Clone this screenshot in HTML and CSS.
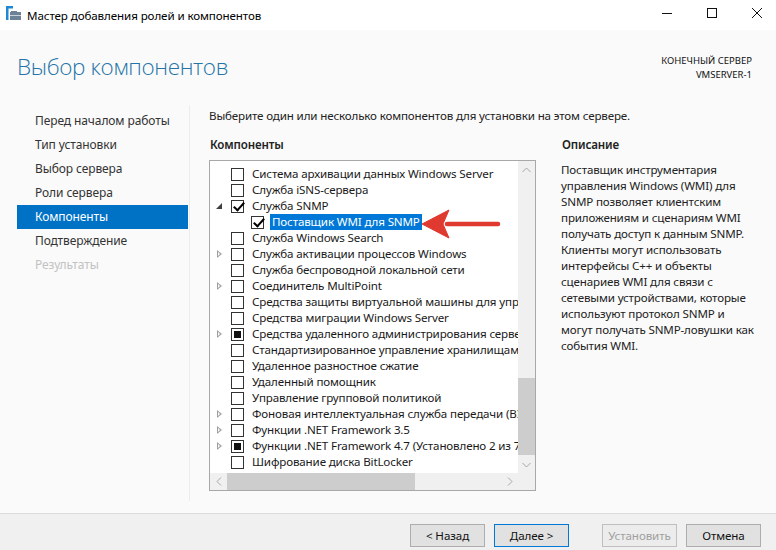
FILE: index.html
```html
<!DOCTYPE html>
<html lang="ru">
<head>
<meta charset="utf-8">
<title>Мастер добавления ролей и компонентов</title>
<link rel="stylesheet" href="styles.css">
</head>
<body>
<div class="window">
  <div class="titlebar">
    <svg class="app-icon" width="16" height="16" viewBox="0 0 16 16">
      <rect x="0" y="0" width="7" height="2.5" fill="#1e88d6"/>
      <rect x="0" y="0" width="2.5" height="14" fill="#1e88d6"/>
      <rect x="5" y="5" width="3" height="1.5" fill="#6d8296"/>
      <rect x="4" y="6" width="11" height="8" fill="#6d8296"/>
      <rect x="8" y="5" width="3" height="1.2" fill="#6d8296"/>
      <rect x="4" y="9" width="11" height="1" fill="#c9d3dc"/>
    </svg>
    <span class="title">Мастер добавления ролей и компонентов</span>
    <div class="controls">
      <span class="ctl"><svg width="10" height="10" viewBox="0 0 10 10"><path d="M0 5.5 H10" stroke="#111" stroke-width="1"/></svg></span>
      <span class="ctl"><svg width="10" height="10" viewBox="0 0 10 10"><rect x="0.5" y="0.5" width="9" height="9" fill="none" stroke="#111" stroke-width="1"/></svg></span>
      <span class="ctl"><svg width="10" height="10" viewBox="0 0 10 10"><path d="M0 0 L10 10 M10 0 L0 10" stroke="#111" stroke-width="1"/></svg></span>
    </div>
  </div>

  <div class="content">
    <div class="header">
      <h1 class="page-title">Выбор компонентов</h1>
      <div class="server">
        <div>КОНЕЧНЫЙ СЕРВЕР</div>
        <div>VMSERVER-1</div>
      </div>
    </div>

    <div class="body">
      <nav class="nav">
        <div class="nav-item">Перед началом работы</div>
        <div class="nav-item">Тип установки</div>
        <div class="nav-item">Выбор сервера</div>
        <div class="nav-item">Роли сервера</div>
        <div class="nav-item active">Компоненты</div>
        <div class="nav-item">Подтверждение</div>
        <div class="nav-item disabled">Результаты</div>
      </nav>

      <div class="main">
        <p class="intro">Выберите один или несколько компонентов для установки на этом сервере.</p>
        <div class="columns">
          <div class="components">
            <h2 class="col-head">Компоненты</h2>
            <div class="tree">
              <div class="tree-list">
                <div class="row"><span class="exp"></span><span class="cb"></span><span class="lbl">Система архивации данных Windows Server</span></div>
                <div class="row"><span class="exp"></span><span class="cb"></span><span class="lbl">Служба iSNS-сервера</span></div>
                <div class="row"><span class="exp open"></span><span class="cb checked"></span><span class="lbl">Служба SNMP</span></div>
                <div class="row child"><span class="exp"></span><span class="cb checked"></span><span class="lbl selected">Поставщик WMI для SNMP</span></div>
                <div class="row"><span class="exp"></span><span class="cb"></span><span class="lbl">Служба Windows Search</span></div>
                <div class="row"><span class="exp closed"></span><span class="cb"></span><span class="lbl">Служба активации процессов Windows</span></div>
                <div class="row"><span class="exp"></span><span class="cb"></span><span class="lbl">Служба беспроводной локальной сети</span></div>
                <div class="row"><span class="exp closed"></span><span class="cb"></span><span class="lbl">Соединитель MultiPoint</span></div>
                <div class="row"><span class="exp"></span><span class="cb"></span><span class="lbl">Средства защиты виртуальной машины для управления экранированной структурой</span></div>
                <div class="row"><span class="exp"></span><span class="cb"></span><span class="lbl">Средства миграции Windows Server</span></div>
                <div class="row"><span class="exp closed"></span><span class="cb partial"></span><span class="lbl">Средства удаленного администрирования сервера</span></div>
                <div class="row"><span class="exp"></span><span class="cb"></span><span class="lbl">Стандартизированное управление хранилищами Windows</span></div>
                <div class="row"><span class="exp"></span><span class="cb"></span><span class="lbl">Удаленное разностное сжатие</span></div>
                <div class="row"><span class="exp"></span><span class="cb"></span><span class="lbl">Удаленный помощник</span></div>
                <div class="row"><span class="exp"></span><span class="cb"></span><span class="lbl">Управление групповой политикой</span></div>
                <div class="row"><span class="exp closed"></span><span class="cb"></span><span class="lbl">Фоновая интеллектуальная служба передачи (BITS)</span></div>
                <div class="row"><span class="exp closed"></span><span class="cb"></span><span class="lbl">Функции .NET Framework 3.5</span></div>
                <div class="row"><span class="exp closed"></span><span class="cb partial"></span><span class="lbl">Функции .NET Framework 4.7 (Установлено 2 из 7)</span></div>
                <div class="row"><span class="exp"></span><span class="cb"></span><span class="lbl">Шифрование диска BitLocker</span></div>
              </div>
              <div class="vscroll">
                <span class="sb-btn"><svg width="9" height="6" viewBox="0 0 9 6"><path d="M0.5 5 L4.5 1 L8.5 5" fill="none" stroke="#a6a6a6" stroke-width="1"/></svg></span>
                <div class="vtrack"><div class="vthumb"></div></div>
                <span class="sb-btn"><svg width="9" height="6" viewBox="0 0 9 6"><path d="M0.5 1 L4.5 5 L8.5 1" fill="none" stroke="#a6a6a6" stroke-width="1"/></svg></span>
              </div>
              <div class="hscroll">
                <span class="sb-btn h"><svg width="6" height="9" viewBox="0 0 6 9"><path d="M5 0.5 L1 4.5 L5 8.5" fill="none" stroke="#a6a6a6" stroke-width="1"/></svg></span>
                <div class="htrack"><div class="hthumb"></div></div>
                <span class="sb-btn h"><svg width="6" height="9" viewBox="0 0 6 9"><path d="M1 0.5 L5 4.5 L1 8.5" fill="none" stroke="#a6a6a6" stroke-width="1"/></svg></span>
              </div>
              <div class="corner"></div>
            </div>
          </div>
          <div class="description">
            <h2 class="col-head">Описание</h2>
            <div class="desc-text">
              <div class="dl">Поставщик инструментария</div>
              <div class="dl">управления Windows (WMI) для</div>
              <div class="dl">SNMP позволяет клиентским</div>
              <div class="dl">приложениям и сценариям WMI</div>
              <div class="dl">получать доступ к данным SNMP.</div>
              <div class="dl">Клиенты могут использовать</div>
              <div class="dl">интерфейсы C++ и объекты</div>
              <div class="dl">сценариев WMI для связи с</div>
              <div class="dl">сетевыми устройствами, которые</div>
              <div class="dl">используют протокол SNMP и</div>
              <div class="dl">могут получать SNMP-ловушки как</div>
              <div class="dl">события WMI.</div>
            </div>
          </div>
        </div>
      </div>
    </div>

    <svg class="callout" width="84" height="34" viewBox="0 0 84 34">
      <path d="M26 16 H77" stroke="#e0392f" stroke-width="4.5" stroke-linecap="round"/>
      <path d="M1 16 L28 2 L22 16 L28 30 Z" fill="#e0392f" stroke="#e0392f" stroke-width="1" stroke-linejoin="round"/>
    </svg>
  </div>

  <div class="footer">
    <button class="btn">&lt; Назад</button>
    <button class="btn primary">Далее &gt;</button>
    <button class="btn disabled wide-gap">Установить</button>
    <button class="btn">Отмена</button>
  </div>
</div>
</body>
</html>
```

FILE: styles.css
```css
* { box-sizing: border-box; }

html, body {
  margin: 0;
  padding: 0;
}

body {
  width: 776px;
  height: 550px;
  overflow: hidden;
  font-family: "Noto Sans", "Open Sans", sans-serif;
  font-size: 11.6px;
  letter-spacing: -0.15px;
  color: #222;
  background: #fafafa;
}

.window {
  display: flex;
  flex-direction: column;
  height: 550px;
}

/* Title bar */
.titlebar {
  height: 30px;
  flex: none;
  display: flex;
  align-items: center;
  background: #ffffff;
  padding-left: 6px;
}

.app-icon { flex: none; margin-top: -2px; }

.title {
  margin-left: 5px;
  font-size: 11.6px;
  letter-spacing: -0.1px;
  color: #000;
}

.controls {
  margin-left: auto;
  display: flex;
  height: 30px;
}

.ctl {
  width: 45px;
  height: 30px;
  display: flex;
  align-items: center;
  justify-content: center;
  padding-left: 6px;
  margin-top: -2px;
}

/* Content */
.content {
  flex: 1;
  position: relative;
  display: flex;
  flex-direction: column;
  background: #fafafa;
}

.header {
  height: 75px;
  flex: none;
  display: flex;
  justify-content: space-between;
  align-items: flex-start;
  padding: 0 24px 0 17px;
}

.page-title {
  margin: 21px 0 0 0;
  font-family: "Open Sans", "Noto Sans", sans-serif;
  font-weight: 300;
  font-size: 22.5px;
  letter-spacing: -0.35px;
  color: #2474a8;
}

.server {
  margin-top: 24px;
  text-align: right;
  font-size: 9.5px;
  letter-spacing: 0;
  line-height: 14px;
  color: #111;
}

.body {
  flex: 1;
  display: flex;
}

/* Navigation */
.nav {
  width: 190px;
  flex: none;
  padding-top: 4px;
  border-right: 1px solid #ececec;
  margin-bottom: 12px;
}

.nav-item {
  height: 24px;
  line-height: 24px;
  margin-left: 17px;
  margin-right: 1px;
  padding-left: 18px;
  font-size: 12px;
  letter-spacing: -0.1px;
  color: #333;
}

.nav-item.active {
  background: #0072c6;
  color: #fff;
}

.nav-item.disabled {
  color: #c2c2c2;
}

/* Main */
.main {
  flex: 1;
  padding-left: 19px;
}

.intro {
  margin: 2px 0 0 0;
  line-height: 18px;
  color: #222;
}

.columns {
  display: flex;
  gap: 25px;
  margin-top: 11px;
}

.components {
  width: 327px;
  flex: none;
}

.col-head {
  margin: 0 0 6px 1px;
  font-size: 11.6px;
  font-weight: 600;
  line-height: 18px;
  color: #222;
}

/* Tree */
.tree {
  height: 331px;
  border: 1px solid #a8a8a8;
  background: #fff;
  display: grid;
  grid-template-columns: 1fr 17px;
  grid-template-rows: 1fr 17px;
}

.tree-list {
  overflow: hidden;
  padding-top: 5px;
  padding-left: 4px;
}

.row {
  height: 16px;
  display: flex;
  align-items: center;
  white-space: nowrap;
  color: #1a1a1a;
}

.row.child { padding-left: 20px; }

.exp {
  width: 17px;
  height: 16px;
  flex: none;
  position: relative;
}

.exp.closed::before {
  content: "";
  position: absolute;
  left: 3px;
  top: 4px;
  width: 0;
  height: 0;
  border-top: 4px solid transparent;
  border-bottom: 4px solid transparent;
  border-left: 5px solid #a0a0a0;
}

.exp.closed::after {
  content: "";
  position: absolute;
  left: 4px;
  top: 6px;
  width: 0;
  height: 0;
  border-top: 2px solid transparent;
  border-bottom: 2px solid transparent;
  border-left: 2.5px solid #fff;
}

.exp.open::before {
  content: "";
  position: absolute;
  left: 2px;
  top: 5px;
  width: 0;
  height: 0;
  border-left: 6px solid transparent;
  border-bottom: 6px solid #404040;
}

.cb {
  width: 13px;
  height: 13px;
  flex: none;
  border: 1px solid #333;
  background: #fff;
  position: relative;
}

.cb.checked::after {
  content: "";
  position: absolute;
  left: 3.5px;
  top: -1px;
  width: 4px;
  height: 9px;
  border-right: 2px solid #000;
  border-bottom: 2px solid #000;
  transform: rotate(42deg);
}

.cb.partial::after {
  content: "";
  position: absolute;
  left: 2px;
  top: 2px;
  width: 7px;
  height: 7px;
  background: #111;
}

.lbl {
  margin-left: 6px;
  padding: 0 2px;
  height: 16px;
  line-height: 16px;
}

.lbl.selected {
  background: #0078d7;
  color: #fff;
}

/* Scrollbars */
.vscroll {
  display: flex;
  flex-direction: column;
  background: #f0f0f0;
}

.sb-btn {
  width: 17px;
  height: 17px;
  flex: none;
  display: flex;
  align-items: center;
  justify-content: center;
}

.vtrack {
  flex: 1;
  padding-top: 200px;
}

.vthumb {
  height: 77px;
  width: 17px;
  background: #cdcdcd;
}

.hscroll {
  display: flex;
  background: #f0f0f0;
}

.htrack {
  flex: 1;
}

.hthumb {
  width: 188px;
  height: 17px;
  background: #cdcdcd;
}

.corner {
  background: #f0f0f0;
}

/* Description */
.description {
  width: 200px;
  flex: none;
}

.desc-text {
  margin: 8px 0 0 0;
  color: #222;
  white-space: nowrap;
}

.dl {
  height: 16px;
  line-height: 16px;
}

/* Callout arrow */
.callout {
  position: absolute;
  left: 421px;
  top: 178px;
}

/* Footer */
.footer {
  height: 37px;
  flex: none;
  border-top: 1px solid #dcdcdc;
  background: #f0f0f0;
  display: flex;
  justify-content: flex-end;
  align-items: flex-start;
  gap: 9px;
  padding: 10px 15px 0 0;
}

.btn {
  width: 75px;
  height: 23px;
  font-family: "Noto Sans", "Open Sans", sans-serif;
  font-size: 11.6px;
  letter-spacing: -0.1px;
  color: #111;
  background: #e1e1e1;
  border: 1px solid #adadad;
  padding: 0;
  line-height: 20px;
}

.btn.primary {
  border-color: #0078d7;
}

.btn.disabled {
  color: #a0a0a0;
  border-color: #bfbfbf;
  background: #ececec;
}

.btn.wide-gap {
  margin-left: 24px;
}
```
